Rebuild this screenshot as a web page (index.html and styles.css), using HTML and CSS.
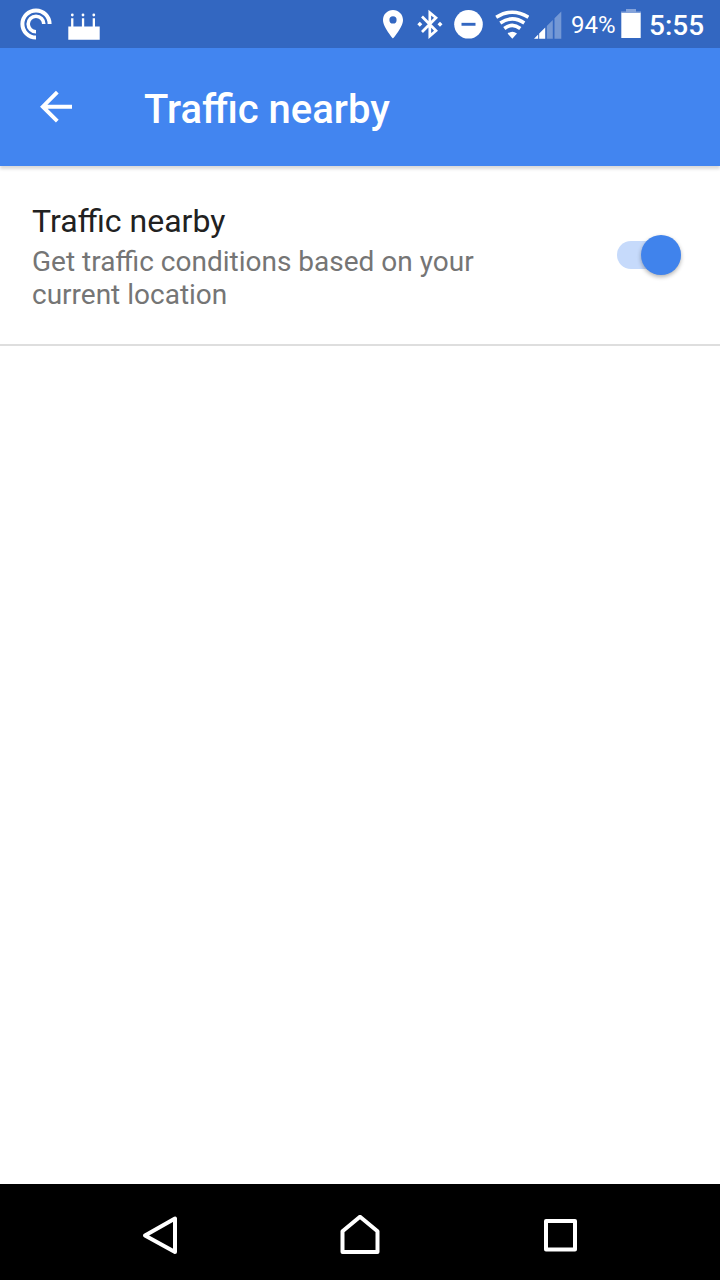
FILE: index.html
```html
<!DOCTYPE html>
<html lang="en">
<head>
<meta charset="utf-8">
<title>Traffic nearby</title>
<link rel="stylesheet" href="styles.css">
</head>
<body>
<div class="screen">
  <div class="status">
    <div class="status-left">
      <svg width="32" height="48" viewBox="20 0 32 48" fill="none" stroke="#fff">
        <path d="M36 37.600A13.600 13.600 0 1 1 49.600 24" stroke-width="4"/>
        <path d="M36 31.800A7.800 7.800 0 1 1 43.800 24" stroke-width="3.600"/>
      </svg>
      <svg width="32" height="48" viewBox="68 0 32 48" fill="#fff">
        <path d="M68.300 26.500h2.800v-8.300h2.300v8.300h8.500v-8.300h2.300v8.300h8.500v-8.300h2.300v8.300h4.700v13.200H68.300z"/>
        <circle cx="72.300" cy="15" r="1.400"/><circle cx="83" cy="15" r="1.400"/><circle cx="93.800" cy="15" r="1.400"/>
      </svg>
    </div>
    <div class="status-right">
      <svg class="pin" width="20" height="48" viewBox="383 0 20 48" fill="#fff">
        <path fill-rule="evenodd" d="M393 10c-5.600 0-10 4.400-10 10 0 7.300 10 18.500 10 18.500s10-11.200 10-18.500c0-5.600-4.400-10-10-10zm0 6.300a3.600 3.600 0 1 1 0 7.200 3.600 3.600 0 0 1 0-7.200z"/>
      </svg>
      <svg class="bluetooth" width="26" height="48" viewBox="417 0 26 48">
        <path d="M422 16.500L436 30.700l-6.200 5.300V12.700L436 17.800 422 32" fill="none" stroke="#fff" stroke-width="2.700"/>
        <path d="M419.800 21.700l2.500 2.500-2.500 2.500-2.500-2.500zM440 21.700l2.500 2.500-2.500 2.500-2.500-2.500z" fill="#fff"/>
      </svg>
      <svg class="dnd" width="29" height="48" viewBox="454 0 29 48">
        <circle cx="468.500" cy="24.300" r="14.300" fill="#fff"/><path d="M461.500 24.300h14" stroke="#3367c1" stroke-width="2.900"/>
      </svg>
      <svg class="wifi" width="34" height="48" viewBox="495 0 34 48" fill="none" stroke="#fff" stroke-width="3.500">
        <path d="M496.200 17.200Q512.300 7.200 528.400 17.200"/>
        <path d="M500.300 23Q512.300 14.700 524.300 23"/>
        <path d="M504.300 28.500Q512.300 22.300 520.300 28.500"/>
        <path d="M507.600 33.500Q512.300 29.800 517 33.500L512.300 38.700z" fill="#fff" stroke="none"/>
      </svg>
      <svg class="signal" width="28" height="48" viewBox="534 0 28 48" fill="#fff">
        <path d="M534 38.700l4.200-4.200v4.200zM539.200 33.500l6-6v11.200h-6z"/>
        <path d="M546.800 26l6-6v18.700h-6zM554.500 18.300l6.800-6.800v27.200h-6.800z" opacity=".32"/>
      </svg>
      <span class="percent">94%</span>
      <svg class="battery" width="20" height="48" viewBox="621 0 20 48" fill="#fff">
        <path d="M626 9h10v2.500h5V13h-20v-1.500h5z" opacity=".4"/><path d="M621.300 13h19.400v25h-19.400z"/>
      </svg>
      <span class="clock">5:55</span>
    </div>
  </div>
  <header class="toolbar">
    <svg class="back" width="33" height="34" viewBox="39 90 33 34" fill="none" stroke="#fff" stroke-width="3.900">
      <path d="M72 106.700H43M57.300 92.200L42.800 106.700l14.500 14.500"/>
    </svg>
    <h1 class="title">Traffic nearby</h1>
  </header>
  <main class="content">
    <div class="setting">
      <div class="labels">
        <div class="name">Traffic nearby</div>
        <div class="summary">Get traffic conditions based on your current location</div>
      </div>
      <div class="switch"><div class="thumb"></div></div>
    </div>
  </main>
  <nav class="navbar">
    <svg width="36" height="40" viewBox="142 1215 36 40"><path d="M145 1235.500L175 1218.500V1252z"/></svg>
    <svg width="40" height="40" viewBox="340 1215 40 40"><path d="M342.500 1231.300L360 1216.700l17.500 14.600v20.700h-35z"/></svg>
    <svg width="34" height="40" viewBox="543 1215 34 40"><path d="M546 1221h29v28.500h-29z"/></svg>
  </nav>
</div>
</body>
</html>
```
FILE: styles.css
```css
* {
  box-sizing: border-box;
}

body {
  margin: 0;
  background: #fff;
  font-family: Roboto, "Liberation Sans", sans-serif;
}

svg {
  display: block;
  flex: none;
}

.screen {
  display: flex;
  flex-direction: column;
  width: 720px;
  height: 1280px;
  overflow: hidden;
}

.status {
  display: flex;
  justify-content: space-between;
  height: 48px;
  padding: 0 16px 0 20px;
  background: #3367c1;
  color: #fff;
}

.status-left {
  display: flex;
  gap: 16px;
}

.status-right {
  display: flex;
}

.pin {
  margin-right: 14px;
}

.bluetooth {
  margin-right: 11px;
}

.dnd {
  margin-right: 12px;
}

.wifi {
  margin-right: 5px;
}

.signal {
  margin-right: 9px;
}

.percent {
  width: 44px;
  margin-right: 6px;
  font-size: 24px;
  line-height: 50px;
  white-space: nowrap;
}

.battery {
  margin-right: 8px;
}

.clock {
  width: 55px;
  font-size: 28px;
  font-weight: 500;
  line-height: 52px;
  white-space: nowrap;
}

.toolbar {
  display: flex;
  align-items: center;
  height: 118px;
  padding-left: 39px;
  background: #4285f0;
  box-shadow: 0 3px 3px rgba(0, 0, 0, 0.15);
  color: #fff;
}

.title {
  margin: 5px 0 0 72px;
  font-size: 40px;
  font-weight: 500;
  line-height: 48px;
}

.content {
  flex: 1;
}

.setting {
  display: flex;
  justify-content: space-between;
  height: 180px;
  padding: 36px 39px 0 32px;
  border-bottom: 2px solid #dedede;
}

.labels {
  width: 500px;
}

.name {
  color: #212121;
  font-size: 32px;
  line-height: 38px;
}

.summary {
  margin-top: 5px;
  color: #757575;
  font-size: 28px;
  line-height: 33px;
}

.switch {
  display: flex;
  align-items: center;
  justify-content: flex-end;
  width: 64px;
  height: 28px;
  margin-top: 39px;
  border-radius: 14px;
  background: #c6dafb;
}

.thumb {
  flex: none;
  width: 40px;
  height: 40px;
  border-radius: 50%;
  background: #4083ec;
  box-shadow: 0 2px 4px rgba(0, 0, 0, 0.3);
}

.navbar {
  display: flex;
  gap: 162px;
  height: 96px;
  padding: 31px 0 0 142px;
  background: #000;
  fill: none;
  stroke: #fff;
  stroke-width: 4;
  stroke-linejoin: round;
}

.navbar svg:last-child {
  margin-left: 1px;
}
```
